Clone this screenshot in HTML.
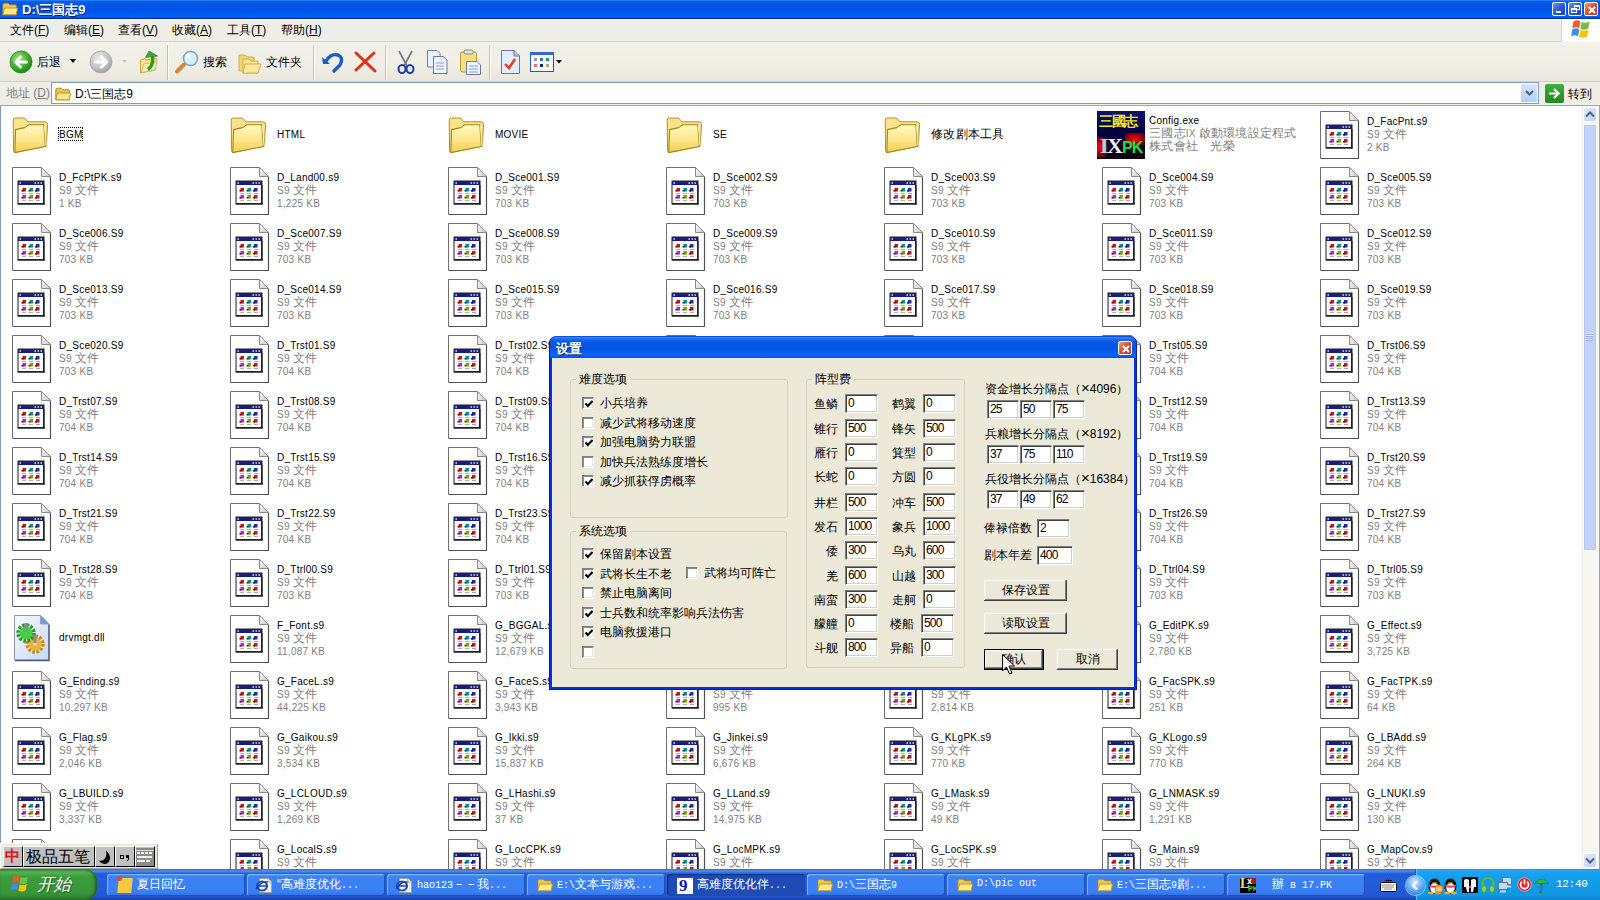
<!DOCTYPE html><html><head><meta charset="utf-8"><style>
*{margin:0;padding:0;box-sizing:border-box}
html,body{width:1600px;height:900px;overflow:hidden;background:#fff}
body{position:relative;font-family:"Liberation Sans",sans-serif;font-size:10px;color:#000}
.c{font-size:12px;line-height:13px}
.a{position:absolute}
.t{position:absolute;white-space:nowrap;line-height:13px}
svg{position:absolute;overflow:visible}
.it{position:absolute;width:218px;height:56px}
.fl .t{letter-spacing:.25px}
.nm{position:absolute;left:47px;white-space:nowrap;line-height:13px;font-size:11px}
.g{color:#808080}
</style></head><body>
<svg width="0" height="0" style="position:absolute">
<defs>
<linearGradient id="fold" x1="0" y1="0" x2="1" y2="1"><stop offset="0" stop-color="#fff"/><stop offset="1" stop-color="#c8c8c8"/></linearGradient>
<linearGradient id="fy" x1="0" y1="0" x2="0" y2="1"><stop offset="0" stop-color="#fff8c0"/><stop offset=".55" stop-color="#fbe68a"/><stop offset="1" stop-color="#f2cf52"/></linearGradient>
<g id="doc">
 <path d="M0.5,0.5 H29.5 L38.5,9.5 V47.5 H0.5 Z" fill="#fff" stroke="#6f6f6f" stroke-width="1"/>
 <path d="M38.5,47.5 V10 M1,47.5 H38.5" stroke="#505050" stroke-width="1.2" fill="none"/>
 <path d="M29.5,0.5 V9.5 H38.5 Z" fill="url(#fold)" stroke="#8a8a8a" stroke-width="1"/>
 <rect x="6" y="14" width="26" height="23" fill="#fbfbfb" stroke="#202020" stroke-width="1"/>
 <rect x="6" y="14" width="26" height="4" fill="#1a1a80"/>
 <rect x="7.5" y="15.3" width="1.4" height="1.4" fill="#fff"/>
 <rect x="22.5" y="15.3" width="1.4" height="1.4" fill="#fff"/><rect x="25.5" y="15.3" width="1.4" height="1.4" fill="#fff"/><rect x="28.5" y="15.3" width="1.4" height="1.4" fill="#fff"/>
 <rect x="31" y="18" width="1.5" height="19.5" fill="#202020"/><rect x="6" y="36" width="26.5" height="1.5" fill="#202020"/>
 <rect x="10.5" y="21" width="3.5" height="3.5" fill="#c01818"/><rect x="17.5" y="21" width="3.5" height="3.5" fill="#108898"/><rect x="24" y="21" width="3.5" height="3.5" fill="#1830b0"/>
 <rect x="10.5" y="28" width="3.5" height="3.5" fill="#c020c0"/><rect x="17.5" y="28" width="3.5" height="3.5" fill="#80a010"/><rect x="24" y="28" width="3.5" height="3.5" fill="#c01818"/>
 <rect x="9.5" y="23" width="2" height="1.5" fill="#600"/><rect x="16.5" y="23" width="2" height="1.5" fill="#044"/><rect x="23" y="23" width="2" height="1.5" fill="#004"/>
 <rect x="9.5" y="30" width="2" height="1.5" fill="#606"/><rect x="16.5" y="30" width="2" height="1.5" fill="#440"/><rect x="23" y="30" width="2" height="1.5" fill="#600"/>
 <rect x="10" y="26" width="4" height="1" fill="#a0c0a0"/><rect x="17" y="26" width="4" height="1" fill="#a0c0a0"/><rect x="24" y="26" width="4" height="1" fill="#c0a0a0"/>
 <rect x="10" y="33" width="4" height="1" fill="#a0c0a0"/><rect x="17" y="33" width="4" height="1" fill="#a0c0a0"/><rect x="24" y="33" width="4" height="1" fill="#c0a0a0"/>
</g>
<g id="folder">
 <path d="M1.2,9.5 Q1.2,7 3.5,7 H12.5 L16,10.8 H33 Q35.6,10.8 35.6,13.5 L34.2,35 L3,41.5 Q1.6,41.5 1.6,39.5 Z" fill="#f8e28a" stroke="#b89020" stroke-width="1"/>
 <path d="M3.6,18.6 L12.6,16.6 Q14,16.2 15,15 L16.5,13.8 H31.8 L33.4,35.6 L2.8,41.6 Z" fill="url(#fy)" stroke="#a88418" stroke-width="1.1"/>
 <path d="M32.5,14.5 L34,34.5" stroke="#fff6c0" stroke-width="1"/>
</g>
<g id="sfolder">
 <path d="M0.8,3 Q0.8,1.2 2.4,1.2 H6 L7.6,2.8 H13.4 Q14.6,2.8 14.6,4 V12.8 H0.8 Z" fill="#f0c850" stroke="#a88020" stroke-width=".9"/>
 <path d="M0.8,12.8 L2.6,6 H15.6 L14.2,12.8 Z" fill="#fde88a" stroke="#b89028" stroke-width=".9"/>
</g>
</defs></svg>
<div class="a" style="left:0;top:0;width:1600px;height:19px;background:linear-gradient(#3d95ff 0,#0a5fe8 1px,#0055e5 5px,#0056e8 12px,#0066ff 17px,#003aa8 18px,#00308c 19px)"></div>
<div class="a" style="left:0;top:19px;width:1600px;height:1px;background:#eef4fb"></div>
<svg style="left:2px;top:2px" width="16" height="14" viewBox="0 0 16 14"><use href="#sfolder"/></svg>
<div class="t" style="left:22px;top:3px;color:#fff;font-weight:bold;font-size:13px;line-height:14px;text-shadow:1px 1px 0 #0a1e6e">D:\三国志9</div>
<div class="a" style="left:1552px;top:2px;width:14px;height:14px;border:1px solid #fff;border-radius:2px;background:linear-gradient(135deg,#7096f4,#2a58d8 50%,#1a3fb8)"><div class="a" style="left:3px;top:8px;width:5px;height:2px;background:#fff"></div></div><div class="a" style="left:1568px;top:2px;width:14px;height:14px;border:1px solid #fff;border-radius:2px;background:linear-gradient(135deg,#7096f4,#2a58d8 50%,#1a3fb8)"><div class="a" style="left:5px;top:2px;width:6px;height:5px;border:1px solid #fff;border-top-width:2px"></div><div class="a" style="left:2px;top:5px;width:6px;height:5px;border:1px solid #fff;border-top-width:2px;background:#3a6ef0"></div></div><div class="a" style="left:1584px;top:2px;width:14px;height:14px;border:1px solid #fff;border-radius:2px;background:linear-gradient(135deg,#e8a080,#d35030 50%,#b83a1c)"><svg style="left:2px;top:2px" width="10" height="10"><path d="M2,2 L8,8 M8,2 L2,8" stroke="#fff" stroke-width="2"/></svg></div><div class="a" style="left:0;top:20px;width:1600px;height:21px;background:#efeee6"></div>
<div class="a" style="left:0;top:41px;width:1561px;height:1px;background:#d8d4c8"></div>
<div class="a" style="left:1561px;top:19px;width:39px;height:23px;background:#fff;border-left:1px solid #d8d4c8"></div>
<div class="t" style="left:10px;top:23px;font-size:12px;line-height:14px">文件(<u>F</u>)</div><div class="t" style="left:64px;top:23px;font-size:12px;line-height:14px">编辑(<u>E</u>)</div><div class="t" style="left:118px;top:23px;font-size:12px;line-height:14px">查看(<u>V</u>)</div><div class="t" style="left:172px;top:23px;font-size:12px;line-height:14px">收藏(<u>A</u>)</div><div class="t" style="left:227px;top:23px;font-size:12px;line-height:14px">工具(<u>T</u>)</div><div class="t" style="left:281px;top:23px;font-size:12px;line-height:14px">帮助(<u>H</u>)</div><svg style="left:1570px;top:19px" width="23" height="21" viewBox="0 0 20 18">
<path d="M3,2 Q6,0 9,2 L8,8 Q5,6 2,8 Z" fill="#f05a28"/><path d="M10,2.5 Q13,4 17,2 L16,8 Q13,10 9,8.5 Z" fill="#7cbb42"/>
<path d="M2,9 Q5,7 8,9 L7,15 Q4,13 1,15 Z" fill="#3a8ee8"/><path d="M9,9.5 Q12,11 16,9 L15,15 Q12,17 8,15.5 Z" fill="#f8c300"/></svg>
<div class="a" style="left:0;top:42px;width:1600px;height:40px;background:linear-gradient(#f2f1ea,#efede3 70%,#e9e7dc)"></div>
<div class="a" style="left:0;top:81px;width:1600px;height:1px;background:#d6d2c2"></div>
<div class="a" style="left:167px;top:45px;width:1px;height:35px;background:#c5c2b2"></div><div class="a" style="left:168px;top:45px;width:1px;height:35px;background:#fff"></div><div class="a" style="left:313px;top:45px;width:1px;height:35px;background:#c5c2b2"></div><div class="a" style="left:314px;top:45px;width:1px;height:35px;background:#fff"></div><div class="a" style="left:385px;top:45px;width:1px;height:35px;background:#c5c2b2"></div><div class="a" style="left:386px;top:45px;width:1px;height:35px;background:#fff"></div><div class="a" style="left:489px;top:45px;width:1px;height:35px;background:#c5c2b2"></div><div class="a" style="left:490px;top:45px;width:1px;height:35px;background:#fff"></div><svg style="left:9px;top:50px" width="24" height="24" viewBox="0 0 24 24">
<defs><radialGradient id="gb" cx=".4" cy=".35" r=".7"><stop offset="0" stop-color="#a9e68a"/><stop offset=".6" stop-color="#3cae2a"/><stop offset="1" stop-color="#1c7a14"/></radialGradient>
<radialGradient id="gg" cx=".4" cy=".35" r=".7"><stop offset="0" stop-color="#f0f0f0"/><stop offset=".6" stop-color="#c4c4c4"/><stop offset="1" stop-color="#9c9c9c"/></radialGradient></defs>
<circle cx="12" cy="12" r="11" fill="url(#gb)" stroke="#2a8a20" stroke-width="0.8"/>
<path d="M17.5,12 H7 M11.5,7 L6.5,12 L11.5,17" fill="none" stroke="#fff" stroke-width="3" stroke-linecap="round" stroke-linejoin="round"/></svg>
<div class="t" style="left:37px;top:55px;font-size:12px;line-height:14px">后退</div>
<svg style="left:70px;top:59px" width="7" height="5"><path d="M0,0 H6 L3,4 Z" fill="#000"/></svg>
<svg style="left:89px;top:50px" width="24" height="24" viewBox="0 0 24 24">
<circle cx="12" cy="12" r="11" fill="url(#gg)" stroke="#a8a8a8" stroke-width="0.8"/>
<path d="M6.5,12 H17 M12.5,7 L17.5,12 L12.5,17" fill="none" stroke="#fff" stroke-width="3" stroke-linecap="round" stroke-linejoin="round"/></svg>
<svg style="left:122px;top:60px" width="5" height="4"><path d="M0,0 H5 L2.5,3 Z" fill="#c8c8c8"/></svg>
<svg style="left:139px;top:50px" width="20" height="24" viewBox="0 0 20 24">
<path d="M1.5,10 L6,8.5 L7,10 L17.5,8 L16,20 L1.5,23 Z" fill="#f8e48c" stroke="#c8a444" stroke-width="0.9"/>
<path d="M2.5,22.5 L4.5,14 L18,12 L16,20 Z" fill="#fcefb0" stroke="#c8a444" stroke-width="0.7"/>
<path d="M9,19.5 Q14.5,16 13.5,6.5" fill="none" stroke="#22a022" stroke-width="3.4"/>
<path d="M6.5,7.5 L10,1 L18.5,6 Z" fill="#30b030" stroke="#1a701a" stroke-width="0.6"/></svg>
<svg style="left:174px;top:50px" width="24" height="24" viewBox="0 0 24 24">
<path d="M3,21.5 L10,14.5" stroke="#d08a40" stroke-width="4" stroke-linecap="round"/>
<circle cx="16.5" cy="8.5" r="7" fill="#d4f0fc" stroke="#8aa4c0" stroke-width="1.6"/>
<circle cx="14.5" cy="6.5" r="2.5" fill="#fff" opacity=".7"/></svg>
<div class="t" style="left:203px;top:55px;font-size:12px;line-height:14px">搜索</div>
<svg style="left:238px;top:52px" width="24" height="22" viewBox="0 0 24 22">
<path d="M1,3 H7 L9,5 H16 V19 H1 Z" fill="#f3d470" stroke="#c9a642" stroke-width="0.8"/>
<path d="M5,7 H11 L13,9 H20 V21 H5 Z" fill="#f8e390" stroke="#c9a642" stroke-width="0.8"/>
<path d="M7,12 H23 L20,21 H5 Z" fill="#f9e89c" stroke="#c9a642" stroke-width="0.8"/></svg>
<div class="t" style="left:266px;top:55px;font-size:12px;line-height:14px">文件夹</div>
<svg style="left:321px;top:51px" width="24" height="22" viewBox="0 0 24 22">
<path d="M5,10 Q10,2 17,4 Q23,7 19,14 L13,20" fill="none" stroke="#1a5cc8" stroke-width="3.4" stroke-linecap="round"/>
<path d="M1,6 L2,13 L9,13 Z" fill="#1a5cc8"/></svg>
<svg style="left:354px;top:51px" width="24" height="22" viewBox="0 0 24 22">
<path d="M2,2 L21,20 M20,2 L2,19" stroke="#e03018" stroke-width="3" stroke-linecap="round"/></svg>
<svg style="left:396px;top:50px" width="20" height="24" viewBox="0 0 20 24">
<path d="M3,1 L11,16 M16,1 L8,16" stroke="#707880" stroke-width="1.6"/>
<ellipse cx="6" cy="19" rx="3.5" ry="4" fill="none" stroke="#1a3aa8" stroke-width="2"/>
<ellipse cx="14" cy="19" rx="3.5" ry="4" fill="none" stroke="#1a3aa8" stroke-width="2"/></svg>
<svg style="left:427px;top:50px" width="24" height="24" viewBox="0 0 24 24">
<path d="M0.5,0.5 H10 L13,3.5 V17 H0.5 Z" fill="#eaf0ff" stroke="#7080a8" stroke-width="1"/>
<path d="M6.5,6.5 H16 L20,10 V23.5 H6.5 Z" fill="#eef3ff" stroke="#6878a8" stroke-width="1"/>
<path d="M9,13 H17 M9,16 H17 M9,19 H17" stroke="#8aa0d8" stroke-width="1"/></svg>
<svg style="left:460px;top:49px" width="24" height="26" viewBox="0 0 24 26">
<rect x="0.5" y="3" width="16" height="20" rx="2" fill="#f6e07a" stroke="#b89a40" stroke-width="1"/>
<rect x="4" y="1" width="9" height="4" rx="1.5" fill="#e0e0e0" stroke="#888" stroke-width="1"/>
<path d="M6.5,12.5 H17 L20.5,16 V25.5 H6.5 Z" fill="#eef3ff" stroke="#6878a8" stroke-width="1"/>
<path d="M9,17 H18 M9,20 H18 M9,23 H18" stroke="#8aa0d8" stroke-width="1"/></svg>
<svg style="left:501px;top:50px" width="20" height="24" viewBox="0 0 20 24">
<path d="M0.5,0.5 H13 L18.5,6 V23.5 H0.5 Z" fill="#e4ecfc" stroke="#6878a8" stroke-width="1"/>
<path d="M13,0.5 V6 H18.5" fill="#b0c4f0" stroke="#6878a8" stroke-width="1"/>
<path d="M4,14 L8,18 L14,9" fill="none" stroke="#e03a20" stroke-width="2.4"/></svg>
<svg style="left:530px;top:52px" width="24" height="20" viewBox="0 0 24 20">
<rect x="0.5" y="0.5" width="23" height="19" fill="#f4f8ff" stroke="#1a5cb8" stroke-width="1"/>
<rect x="0" y="0" width="24" height="3" fill="#2a6cc8"/>
<rect x="4" y="6" width="3" height="3" fill="#9898a8"/><rect x="10" y="6" width="3" height="3" fill="#3070c0"/><rect x="16" y="6" width="3" height="3" fill="#20a040"/>
<rect x="4" y="12" width="3" height="3" fill="#e07060"/><rect x="10" y="12" width="3" height="3" fill="#102870"/><rect x="16" y="12" width="3" height="3" fill="#c0a060"/></svg>
<svg style="left:556px;top:60px" width="6" height="4"><path d="M0,0 H6 L3,3.5 Z" fill="#000"/></svg>
<div class="a" style="left:0;top:82px;width:1600px;height:23px;background:#efeee6"></div>
<div class="t" style="left:6px;top:86px;font-size:12px;line-height:14px;color:#7f7f7f">地址 (<u>D</u>)</div>
<div class="a" style="left:51px;top:82px;width:1488px;height:22px;background:#fff;border:1px solid #7f9db9"></div>
<svg style="left:55px;top:87px" width="16" height="14" viewBox="0 0 16 14"><use href="#sfolder"/></svg>
<div class="t" style="left:75px;top:87px;font-size:12px;line-height:14px">D:\三国志9</div>
<div class="a" style="left:1521px;top:84px;width:16px;height:18px;background:linear-gradient(#d8e4fc,#b8cdf8);border-radius:1px"></div>
<svg style="left:1525px;top:90px" width="9" height="6"><path d="M1,1 L4.5,4.5 L8,1" fill="none" stroke="#4d6185" stroke-width="2"/></svg>
<div class="a" style="left:1545px;top:84px;width:19px;height:19px;border-radius:2px;background:linear-gradient(#40b040,#1d8a1d)"></div>
<svg style="left:1547px;top:86px" width="15" height="15"><path d="M2,7.5 H11 M7,3 L11.5,7.5 L7,12" fill="none" stroke="#fff" stroke-width="2.2"/></svg>
<div class="t" style="left:1568px;top:87px;font-size:12px;line-height:14px">转到</div>
<div class="a" style="left:0;top:105px;width:1600px;height:764px;background:#fff"></div>
<div class="a" style="left:0;top:105px;width:1px;height:764px;background:#7f9db9"></div>
<div class="a" style="left:0;top:105px;width:1600px;height:1px;background:#99a8c0"></div>
<div class="a" style="left:1582px;top:106px;width:17px;height:763px;background:#f7f6f0;border-left:1px solid #efeee6"></div>
<div class="a" style="left:1599px;top:105px;width:1px;height:764px;background:#9aa4b8"></div>
<div class="a" style="left:1583px;top:107px;width:14px;height:15px;border:1px solid #fff;border-radius:2px;background:linear-gradient(135deg,#dfe8fe,#c0d1f8)"></div>
<svg style="left:1585px;top:111px" width="10" height="7"><path d="M1,5.5 L5,1.5 L9,5.5" fill="none" stroke="#4d6185" stroke-width="2"/></svg>
<div class="a" style="left:1583px;top:124px;width:14px;height:427px;border:1px solid #fff;border-radius:2px;background:#c4d2f9;box-shadow:inset 0 0 0 1px #b6c6f2"></div>
<div class="a" style="left:1586px;top:333px;width:7px;height:8px;background:repeating-linear-gradient(#eef2fe 0 1px,#90a8e8 1px 2px)"></div>
<div class="a" style="left:1583px;top:853px;width:14px;height:15px;border:1px solid #fff;border-radius:2px;background:linear-gradient(135deg,#dfe8fe,#c0d1f8)"></div>
<svg style="left:1585px;top:857px" width="10" height="7"><path d="M1,1.5 L5,5.5 L9,1.5" fill="none" stroke="#4d6185" stroke-width="2"/></svg>
<div class="fl"><svg style="left:12px;top:111px" width="37" height="43" viewBox="0 0 37 43"><use href="#folder"/></svg><div class="t" style="left:59px;top:128px">BGM</div><svg style="left:230px;top:111px" width="37" height="43" viewBox="0 0 37 43"><use href="#folder"/></svg><div class="t" style="left:277px;top:128px">HTML</div><svg style="left:448px;top:111px" width="37" height="43" viewBox="0 0 37 43"><use href="#folder"/></svg><div class="t" style="left:495px;top:128px">MOVIE</div><svg style="left:666px;top:111px" width="37" height="43" viewBox="0 0 37 43"><use href="#folder"/></svg><div class="t" style="left:713px;top:128px">SE</div><svg style="left:884px;top:111px" width="37" height="43" viewBox="0 0 37 43"><use href="#folder"/></svg><div class="t" style="left:931px;top:128px"><span class="c">修改剧本工具</span></div><svg style="left:1320px;top:111px" width="39" height="48" viewBox="0 0 39 48"><use href="#doc"/></svg><div class="t" style="left:1367px;top:115px">D_FacPnt.s9<br><span class="g">S9 <span class="c">文件</span><br>2 KB</span></div><svg style="left:12px;top:167px" width="39" height="48" viewBox="0 0 39 48"><use href="#doc"/></svg><div class="t" style="left:59px;top:171px">D_FcPtPK.s9<br><span class="g">S9 <span class="c">文件</span><br>1 KB</span></div><svg style="left:230px;top:167px" width="39" height="48" viewBox="0 0 39 48"><use href="#doc"/></svg><div class="t" style="left:277px;top:171px">D_Land00.s9<br><span class="g">S9 <span class="c">文件</span><br>1,225 KB</span></div><svg style="left:448px;top:167px" width="39" height="48" viewBox="0 0 39 48"><use href="#doc"/></svg><div class="t" style="left:495px;top:171px">D_Sce001.S9<br><span class="g">S9 <span class="c">文件</span><br>703 KB</span></div><svg style="left:666px;top:167px" width="39" height="48" viewBox="0 0 39 48"><use href="#doc"/></svg><div class="t" style="left:713px;top:171px">D_Sce002.S9<br><span class="g">S9 <span class="c">文件</span><br>703 KB</span></div><svg style="left:884px;top:167px" width="39" height="48" viewBox="0 0 39 48"><use href="#doc"/></svg><div class="t" style="left:931px;top:171px">D_Sce003.S9<br><span class="g">S9 <span class="c">文件</span><br>703 KB</span></div><svg style="left:1102px;top:167px" width="39" height="48" viewBox="0 0 39 48"><use href="#doc"/></svg><div class="t" style="left:1149px;top:171px">D_Sce004.S9<br><span class="g">S9 <span class="c">文件</span><br>703 KB</span></div><svg style="left:1320px;top:167px" width="39" height="48" viewBox="0 0 39 48"><use href="#doc"/></svg><div class="t" style="left:1367px;top:171px">D_Sce005.S9<br><span class="g">S9 <span class="c">文件</span><br>703 KB</span></div><svg style="left:12px;top:223px" width="39" height="48" viewBox="0 0 39 48"><use href="#doc"/></svg><div class="t" style="left:59px;top:227px">D_Sce006.S9<br><span class="g">S9 <span class="c">文件</span><br>703 KB</span></div><svg style="left:230px;top:223px" width="39" height="48" viewBox="0 0 39 48"><use href="#doc"/></svg><div class="t" style="left:277px;top:227px">D_Sce007.S9<br><span class="g">S9 <span class="c">文件</span><br>703 KB</span></div><svg style="left:448px;top:223px" width="39" height="48" viewBox="0 0 39 48"><use href="#doc"/></svg><div class="t" style="left:495px;top:227px">D_Sce008.S9<br><span class="g">S9 <span class="c">文件</span><br>703 KB</span></div><svg style="left:666px;top:223px" width="39" height="48" viewBox="0 0 39 48"><use href="#doc"/></svg><div class="t" style="left:713px;top:227px">D_Sce009.S9<br><span class="g">S9 <span class="c">文件</span><br>703 KB</span></div><svg style="left:884px;top:223px" width="39" height="48" viewBox="0 0 39 48"><use href="#doc"/></svg><div class="t" style="left:931px;top:227px">D_Sce010.S9<br><span class="g">S9 <span class="c">文件</span><br>703 KB</span></div><svg style="left:1102px;top:223px" width="39" height="48" viewBox="0 0 39 48"><use href="#doc"/></svg><div class="t" style="left:1149px;top:227px">D_Sce011.S9<br><span class="g">S9 <span class="c">文件</span><br>703 KB</span></div><svg style="left:1320px;top:223px" width="39" height="48" viewBox="0 0 39 48"><use href="#doc"/></svg><div class="t" style="left:1367px;top:227px">D_Sce012.S9<br><span class="g">S9 <span class="c">文件</span><br>703 KB</span></div><svg style="left:12px;top:279px" width="39" height="48" viewBox="0 0 39 48"><use href="#doc"/></svg><div class="t" style="left:59px;top:283px">D_Sce013.S9<br><span class="g">S9 <span class="c">文件</span><br>703 KB</span></div><svg style="left:230px;top:279px" width="39" height="48" viewBox="0 0 39 48"><use href="#doc"/></svg><div class="t" style="left:277px;top:283px">D_Sce014.S9<br><span class="g">S9 <span class="c">文件</span><br>703 KB</span></div><svg style="left:448px;top:279px" width="39" height="48" viewBox="0 0 39 48"><use href="#doc"/></svg><div class="t" style="left:495px;top:283px">D_Sce015.S9<br><span class="g">S9 <span class="c">文件</span><br>703 KB</span></div><svg style="left:666px;top:279px" width="39" height="48" viewBox="0 0 39 48"><use href="#doc"/></svg><div class="t" style="left:713px;top:283px">D_Sce016.S9<br><span class="g">S9 <span class="c">文件</span><br>703 KB</span></div><svg style="left:884px;top:279px" width="39" height="48" viewBox="0 0 39 48"><use href="#doc"/></svg><div class="t" style="left:931px;top:283px">D_Sce017.S9<br><span class="g">S9 <span class="c">文件</span><br>703 KB</span></div><svg style="left:1102px;top:279px" width="39" height="48" viewBox="0 0 39 48"><use href="#doc"/></svg><div class="t" style="left:1149px;top:283px">D_Sce018.S9<br><span class="g">S9 <span class="c">文件</span><br>703 KB</span></div><svg style="left:1320px;top:279px" width="39" height="48" viewBox="0 0 39 48"><use href="#doc"/></svg><div class="t" style="left:1367px;top:283px">D_Sce019.S9<br><span class="g">S9 <span class="c">文件</span><br>703 KB</span></div><svg style="left:12px;top:335px" width="39" height="48" viewBox="0 0 39 48"><use href="#doc"/></svg><div class="t" style="left:59px;top:339px">D_Sce020.S9<br><span class="g">S9 <span class="c">文件</span><br>703 KB</span></div><svg style="left:230px;top:335px" width="39" height="48" viewBox="0 0 39 48"><use href="#doc"/></svg><div class="t" style="left:277px;top:339px">D_Trst01.S9<br><span class="g">S9 <span class="c">文件</span><br>704 KB</span></div><svg style="left:448px;top:335px" width="39" height="48" viewBox="0 0 39 48"><use href="#doc"/></svg><div class="t" style="left:495px;top:339px">D_Trst02.S9<br><span class="g">S9 <span class="c">文件</span><br>704 KB</span></div><svg style="left:666px;top:335px" width="39" height="48" viewBox="0 0 39 48"><use href="#doc"/></svg><div class="t" style="left:713px;top:339px">D_Trst03.S9<br><span class="g">S9 <span class="c">文件</span><br>704 KB</span></div><svg style="left:884px;top:335px" width="39" height="48" viewBox="0 0 39 48"><use href="#doc"/></svg><div class="t" style="left:931px;top:339px">D_Trst04.S9<br><span class="g">S9 <span class="c">文件</span><br>704 KB</span></div><svg style="left:1102px;top:335px" width="39" height="48" viewBox="0 0 39 48"><use href="#doc"/></svg><div class="t" style="left:1149px;top:339px">D_Trst05.S9<br><span class="g">S9 <span class="c">文件</span><br>704 KB</span></div><svg style="left:1320px;top:335px" width="39" height="48" viewBox="0 0 39 48"><use href="#doc"/></svg><div class="t" style="left:1367px;top:339px">D_Trst06.S9<br><span class="g">S9 <span class="c">文件</span><br>704 KB</span></div><svg style="left:12px;top:391px" width="39" height="48" viewBox="0 0 39 48"><use href="#doc"/></svg><div class="t" style="left:59px;top:395px">D_Trst07.S9<br><span class="g">S9 <span class="c">文件</span><br>704 KB</span></div><svg style="left:230px;top:391px" width="39" height="48" viewBox="0 0 39 48"><use href="#doc"/></svg><div class="t" style="left:277px;top:395px">D_Trst08.S9<br><span class="g">S9 <span class="c">文件</span><br>704 KB</span></div><svg style="left:448px;top:391px" width="39" height="48" viewBox="0 0 39 48"><use href="#doc"/></svg><div class="t" style="left:495px;top:395px">D_Trst09.S9<br><span class="g">S9 <span class="c">文件</span><br>704 KB</span></div><svg style="left:666px;top:391px" width="39" height="48" viewBox="0 0 39 48"><use href="#doc"/></svg><div class="t" style="left:713px;top:395px">D_Trst10.S9<br><span class="g">S9 <span class="c">文件</span><br>704 KB</span></div><svg style="left:884px;top:391px" width="39" height="48" viewBox="0 0 39 48"><use href="#doc"/></svg><div class="t" style="left:931px;top:395px">D_Trst11.S9<br><span class="g">S9 <span class="c">文件</span><br>704 KB</span></div><svg style="left:1102px;top:391px" width="39" height="48" viewBox="0 0 39 48"><use href="#doc"/></svg><div class="t" style="left:1149px;top:395px">D_Trst12.S9<br><span class="g">S9 <span class="c">文件</span><br>704 KB</span></div><svg style="left:1320px;top:391px" width="39" height="48" viewBox="0 0 39 48"><use href="#doc"/></svg><div class="t" style="left:1367px;top:395px">D_Trst13.S9<br><span class="g">S9 <span class="c">文件</span><br>704 KB</span></div><svg style="left:12px;top:447px" width="39" height="48" viewBox="0 0 39 48"><use href="#doc"/></svg><div class="t" style="left:59px;top:451px">D_Trst14.S9<br><span class="g">S9 <span class="c">文件</span><br>704 KB</span></div><svg style="left:230px;top:447px" width="39" height="48" viewBox="0 0 39 48"><use href="#doc"/></svg><div class="t" style="left:277px;top:451px">D_Trst15.S9<br><span class="g">S9 <span class="c">文件</span><br>704 KB</span></div><svg style="left:448px;top:447px" width="39" height="48" viewBox="0 0 39 48"><use href="#doc"/></svg><div class="t" style="left:495px;top:451px">D_Trst16.S9<br><span class="g">S9 <span class="c">文件</span><br>704 KB</span></div><svg style="left:666px;top:447px" width="39" height="48" viewBox="0 0 39 48"><use href="#doc"/></svg><div class="t" style="left:713px;top:451px">D_Trst17.S9<br><span class="g">S9 <span class="c">文件</span><br>704 KB</span></div><svg style="left:884px;top:447px" width="39" height="48" viewBox="0 0 39 48"><use href="#doc"/></svg><div class="t" style="left:931px;top:451px">D_Trst18.S9<br><span class="g">S9 <span class="c">文件</span><br>704 KB</span></div><svg style="left:1102px;top:447px" width="39" height="48" viewBox="0 0 39 48"><use href="#doc"/></svg><div class="t" style="left:1149px;top:451px">D_Trst19.S9<br><span class="g">S9 <span class="c">文件</span><br>704 KB</span></div><svg style="left:1320px;top:447px" width="39" height="48" viewBox="0 0 39 48"><use href="#doc"/></svg><div class="t" style="left:1367px;top:451px">D_Trst20.S9<br><span class="g">S9 <span class="c">文件</span><br>704 KB</span></div><svg style="left:12px;top:503px" width="39" height="48" viewBox="0 0 39 48"><use href="#doc"/></svg><div class="t" style="left:59px;top:507px">D_Trst21.S9<br><span class="g">S9 <span class="c">文件</span><br>704 KB</span></div><svg style="left:230px;top:503px" width="39" height="48" viewBox="0 0 39 48"><use href="#doc"/></svg><div class="t" style="left:277px;top:507px">D_Trst22.S9<br><span class="g">S9 <span class="c">文件</span><br>704 KB</span></div><svg style="left:448px;top:503px" width="39" height="48" viewBox="0 0 39 48"><use href="#doc"/></svg><div class="t" style="left:495px;top:507px">D_Trst23.S9<br><span class="g">S9 <span class="c">文件</span><br>704 KB</span></div><svg style="left:666px;top:503px" width="39" height="48" viewBox="0 0 39 48"><use href="#doc"/></svg><div class="t" style="left:713px;top:507px">D_Trst24.S9<br><span class="g">S9 <span class="c">文件</span><br>704 KB</span></div><svg style="left:884px;top:503px" width="39" height="48" viewBox="0 0 39 48"><use href="#doc"/></svg><div class="t" style="left:931px;top:507px">D_Trst25.S9<br><span class="g">S9 <span class="c">文件</span><br>704 KB</span></div><svg style="left:1102px;top:503px" width="39" height="48" viewBox="0 0 39 48"><use href="#doc"/></svg><div class="t" style="left:1149px;top:507px">D_Trst26.S9<br><span class="g">S9 <span class="c">文件</span><br>704 KB</span></div><svg style="left:1320px;top:503px" width="39" height="48" viewBox="0 0 39 48"><use href="#doc"/></svg><div class="t" style="left:1367px;top:507px">D_Trst27.S9<br><span class="g">S9 <span class="c">文件</span><br>704 KB</span></div><svg style="left:12px;top:559px" width="39" height="48" viewBox="0 0 39 48"><use href="#doc"/></svg><div class="t" style="left:59px;top:563px">D_Trst28.S9<br><span class="g">S9 <span class="c">文件</span><br>704 KB</span></div><svg style="left:230px;top:559px" width="39" height="48" viewBox="0 0 39 48"><use href="#doc"/></svg><div class="t" style="left:277px;top:563px">D_Ttrl00.S9<br><span class="g">S9 <span class="c">文件</span><br>703 KB</span></div><svg style="left:448px;top:559px" width="39" height="48" viewBox="0 0 39 48"><use href="#doc"/></svg><div class="t" style="left:495px;top:563px">D_Ttrl01.S9<br><span class="g">S9 <span class="c">文件</span><br>703 KB</span></div><svg style="left:666px;top:559px" width="39" height="48" viewBox="0 0 39 48"><use href="#doc"/></svg><div class="t" style="left:713px;top:563px">D_Ttrl02.S9<br><span class="g">S9 <span class="c">文件</span><br>703 KB</span></div><svg style="left:884px;top:559px" width="39" height="48" viewBox="0 0 39 48"><use href="#doc"/></svg><div class="t" style="left:931px;top:563px">D_Ttrl03.S9<br><span class="g">S9 <span class="c">文件</span><br>703 KB</span></div><svg style="left:1102px;top:559px" width="39" height="48" viewBox="0 0 39 48"><use href="#doc"/></svg><div class="t" style="left:1149px;top:563px">D_Ttrl04.S9<br><span class="g">S9 <span class="c">文件</span><br>703 KB</span></div><svg style="left:1320px;top:559px" width="39" height="48" viewBox="0 0 39 48"><use href="#doc"/></svg><div class="t" style="left:1367px;top:563px">D_Ttrl05.S9<br><span class="g">S9 <span class="c">文件</span><br>703 KB</span></div><svg style="left:230px;top:615px" width="39" height="48" viewBox="0 0 39 48"><use href="#doc"/></svg><div class="t" style="left:277px;top:619px">F_Font.s9<br><span class="g">S9 <span class="c">文件</span><br>11,087 KB</span></div><svg style="left:448px;top:615px" width="39" height="48" viewBox="0 0 39 48"><use href="#doc"/></svg><div class="t" style="left:495px;top:619px">G_BGGAL.s9<br><span class="g">S9 <span class="c">文件</span><br>12,679 KB</span></div><svg style="left:666px;top:615px" width="39" height="48" viewBox="0 0 39 48"><use href="#doc"/></svg><div class="t" style="left:713px;top:619px">G_EdCPK.s9<br><span class="g">S9 <span class="c">文件</span><br>1,000 KB</span></div><svg style="left:884px;top:615px" width="39" height="48" viewBox="0 0 39 48"><use href="#doc"/></svg><div class="t" style="left:931px;top:619px">G_EdMPK.s9<br><span class="g">S9 <span class="c">文件</span><br>1,000 KB</span></div><svg style="left:1102px;top:615px" width="39" height="48" viewBox="0 0 39 48"><use href="#doc"/></svg><div class="t" style="left:1149px;top:619px">G_EditPK.s9<br><span class="g">S9 <span class="c">文件</span><br>2,780 KB</span></div><svg style="left:1320px;top:615px" width="39" height="48" viewBox="0 0 39 48"><use href="#doc"/></svg><div class="t" style="left:1367px;top:619px">G_Effect.s9<br><span class="g">S9 <span class="c">文件</span><br>3,725 KB</span></div><svg style="left:12px;top:671px" width="39" height="48" viewBox="0 0 39 48"><use href="#doc"/></svg><div class="t" style="left:59px;top:675px">G_Ending.s9<br><span class="g">S9 <span class="c">文件</span><br>10,297 KB</span></div><svg style="left:230px;top:671px" width="39" height="48" viewBox="0 0 39 48"><use href="#doc"/></svg><div class="t" style="left:277px;top:675px">G_FaceL.s9<br><span class="g">S9 <span class="c">文件</span><br>44,225 KB</span></div><svg style="left:448px;top:671px" width="39" height="48" viewBox="0 0 39 48"><use href="#doc"/></svg><div class="t" style="left:495px;top:675px">G_FaceS.s9<br><span class="g">S9 <span class="c">文件</span><br>3,943 KB</span></div><svg style="left:666px;top:671px" width="39" height="48" viewBox="0 0 39 48"><use href="#doc"/></svg><div class="t" style="left:713px;top:675px">G_FacMPK.s9<br><span class="g">S9 <span class="c">文件</span><br>995 KB</span></div><svg style="left:884px;top:671px" width="39" height="48" viewBox="0 0 39 48"><use href="#doc"/></svg><div class="t" style="left:931px;top:675px">G_FacPPK.s9<br><span class="g">S9 <span class="c">文件</span><br>2,814 KB</span></div><svg style="left:1102px;top:671px" width="39" height="48" viewBox="0 0 39 48"><use href="#doc"/></svg><div class="t" style="left:1149px;top:675px">G_FacSPK.s9<br><span class="g">S9 <span class="c">文件</span><br>251 KB</span></div><svg style="left:1320px;top:671px" width="39" height="48" viewBox="0 0 39 48"><use href="#doc"/></svg><div class="t" style="left:1367px;top:675px">G_FacTPK.s9<br><span class="g">S9 <span class="c">文件</span><br>64 KB</span></div><svg style="left:12px;top:727px" width="39" height="48" viewBox="0 0 39 48"><use href="#doc"/></svg><div class="t" style="left:59px;top:731px">G_Flag.s9<br><span class="g">S9 <span class="c">文件</span><br>2,046 KB</span></div><svg style="left:230px;top:727px" width="39" height="48" viewBox="0 0 39 48"><use href="#doc"/></svg><div class="t" style="left:277px;top:731px">G_Gaikou.s9<br><span class="g">S9 <span class="c">文件</span><br>3,534 KB</span></div><svg style="left:448px;top:727px" width="39" height="48" viewBox="0 0 39 48"><use href="#doc"/></svg><div class="t" style="left:495px;top:731px">G_Ikki.s9<br><span class="g">S9 <span class="c">文件</span><br>15,837 KB</span></div><svg style="left:666px;top:727px" width="39" height="48" viewBox="0 0 39 48"><use href="#doc"/></svg><div class="t" style="left:713px;top:731px">G_Jinkei.s9<br><span class="g">S9 <span class="c">文件</span><br>6,676 KB</span></div><svg style="left:884px;top:727px" width="39" height="48" viewBox="0 0 39 48"><use href="#doc"/></svg><div class="t" style="left:931px;top:731px">G_KLgPK.s9<br><span class="g">S9 <span class="c">文件</span><br>770 KB</span></div><svg style="left:1102px;top:727px" width="39" height="48" viewBox="0 0 39 48"><use href="#doc"/></svg><div class="t" style="left:1149px;top:731px">G_KLogo.s9<br><span class="g">S9 <span class="c">文件</span><br>770 KB</span></div><svg style="left:1320px;top:727px" width="39" height="48" viewBox="0 0 39 48"><use href="#doc"/></svg><div class="t" style="left:1367px;top:731px">G_LBAdd.s9<br><span class="g">S9 <span class="c">文件</span><br>264 KB</span></div><svg style="left:12px;top:783px" width="39" height="48" viewBox="0 0 39 48"><use href="#doc"/></svg><div class="t" style="left:59px;top:787px">G_LBUILD.s9<br><span class="g">S9 <span class="c">文件</span><br>3,337 KB</span></div><svg style="left:230px;top:783px" width="39" height="48" viewBox="0 0 39 48"><use href="#doc"/></svg><div class="t" style="left:277px;top:787px">G_LCLOUD.s9<br><span class="g">S9 <span class="c">文件</span><br>1,269 KB</span></div><svg style="left:448px;top:783px" width="39" height="48" viewBox="0 0 39 48"><use href="#doc"/></svg><div class="t" style="left:495px;top:787px">G_LHashi.s9<br><span class="g">S9 <span class="c">文件</span><br>37 KB</span></div><svg style="left:666px;top:783px" width="39" height="48" viewBox="0 0 39 48"><use href="#doc"/></svg><div class="t" style="left:713px;top:787px">G_LLand.s9<br><span class="g">S9 <span class="c">文件</span><br>14,975 KB</span></div><svg style="left:884px;top:783px" width="39" height="48" viewBox="0 0 39 48"><use href="#doc"/></svg><div class="t" style="left:931px;top:787px">G_LMask.s9<br><span class="g">S9 <span class="c">文件</span><br>49 KB</span></div><svg style="left:1102px;top:783px" width="39" height="48" viewBox="0 0 39 48"><use href="#doc"/></svg><div class="t" style="left:1149px;top:787px">G_LNMASK.s9<br><span class="g">S9 <span class="c">文件</span><br>1,291 KB</span></div><svg style="left:1320px;top:783px" width="39" height="48" viewBox="0 0 39 48"><use href="#doc"/></svg><div class="t" style="left:1367px;top:787px">G_LNUKI.s9<br><span class="g">S9 <span class="c">文件</span><br>130 KB</span></div><svg style="left:12px;top:839px" width="39" height="48" viewBox="0 0 39 48"><use href="#doc"/></svg><div class="t" style="left:59px;top:843px">G_LocalC.s9<br><span class="g">S9 <span class="c">文件</span><br>1 KB</span></div><svg style="left:230px;top:839px" width="39" height="48" viewBox="0 0 39 48"><use href="#doc"/></svg><div class="t" style="left:277px;top:843px">G_LocalS.s9<br><span class="g">S9 <span class="c">文件</span><br>1 KB</span></div><svg style="left:448px;top:839px" width="39" height="48" viewBox="0 0 39 48"><use href="#doc"/></svg><div class="t" style="left:495px;top:843px">G_LocCPK.s9<br><span class="g">S9 <span class="c">文件</span><br>1 KB</span></div><svg style="left:666px;top:839px" width="39" height="48" viewBox="0 0 39 48"><use href="#doc"/></svg><div class="t" style="left:713px;top:843px">G_LocMPK.s9<br><span class="g">S9 <span class="c">文件</span><br>1 KB</span></div><svg style="left:884px;top:839px" width="39" height="48" viewBox="0 0 39 48"><use href="#doc"/></svg><div class="t" style="left:931px;top:843px">G_LocSPK.s9<br><span class="g">S9 <span class="c">文件</span><br>1 KB</span></div><svg style="left:1102px;top:839px" width="39" height="48" viewBox="0 0 39 48"><use href="#doc"/></svg><div class="t" style="left:1149px;top:843px">G_Main.s9<br><span class="g">S9 <span class="c">文件</span><br>1 KB</span></div><svg style="left:1320px;top:839px" width="39" height="48" viewBox="0 0 39 48"><use href="#doc"/></svg><div class="t" style="left:1367px;top:843px">G_MapCov.s9<br><span class="g">S9 <span class="c">文件</span><br>1 KB</span></div><div class="a" style="left:1097px;top:111px;width:48px;height:48px;background:linear-gradient(#101070,#000040 45%,#100010);overflow:hidden">
<div class="a" style="left:28px;top:22px;width:20px;height:12px;background:radial-gradient(#f01010,#800000 70%,transparent)"></div>
<div class="a" style="left:-4px;top:26px;width:14px;height:20px;background:radial-gradient(#f01010,#900000 60%,transparent)"></div>
<div class="a" style="left:2px;top:3px;font-size:14px;line-height:16px;color:#e8e818;font-weight:bold;letter-spacing:-1.5px;font-family:Liberation Serif,serif">三國志</div>
<div class="a" style="left:3px;top:24px;font-family:Liberation Serif,serif;font-size:22px;line-height:22px;color:#90e0e8;font-weight:bold">I</div>
<div class="a" style="left:10px;top:24px;font-family:Liberation Serif,serif;font-size:22px;line-height:22px;color:#f0f0f0;font-weight:bold">X</div>
<div class="a" style="left:25px;top:29px;font-size:16px;line-height:16px;color:#20e040;font-weight:bold;letter-spacing:-1px">PK</div>
</div>
<div class="t" style="left:1149px;top:114px">Config.exe<br><span class="g"><span class="c">三國志</span>IX <span class="c">啟動環境設定程式</span><br><span class="c">株式會社　光榮</span></span></div>
<svg style="left:13px;top:614px" width="38" height="48" viewBox="0 0 38 48">
<defs><linearGradient id="dg" x1="0" y1="0" x2="1" y2="1"><stop offset="0" stop-color="#f8faff"/><stop offset="1" stop-color="#c4d8f6"/></linearGradient></defs>
<path d="M1.5,1.5 H27.5 L36,10 V46 H1.5 Z" fill="url(#dg)" stroke="#8898b8" stroke-width="1"/>
<path d="M36,10.5 V46.5 H2" fill="none" stroke="#505a78" stroke-width="1.4"/>
<path d="M27.5,1.5 V10 H36 Z" fill="#6a9ee0" stroke="#8898b8" stroke-width=".8"/>
<circle cx="22" cy="30" r="6.5" fill="#f0b428"/><circle cx="22" cy="30" r="8" fill="none" stroke="#c88a18" stroke-width="3.4" stroke-dasharray="2.6 1.6"/>
<circle cx="22" cy="30" r="2" fill="#c0d4f0"/>
<circle cx="13" cy="19" r="6.5" fill="#44d044"/><circle cx="13" cy="19" r="8" fill="none" stroke="#1e9a1e" stroke-width="3.4" stroke-dasharray="2.6 1.6"/>
<rect x="11.5" y="9" width="3" height="9" fill="#8a8aa8"/><rect x="20.5" y="21" width="3" height="8" fill="#8a8aa8"/>
</svg>
<div class="t" style="left:59px;top:631px">drvmgt.dll</div>
</div><div class="a" style="left:58px;top:127px;width:25px;height:14px;border:1px dotted #000"></div><div class="a" style="left:549px;top:336px;width:588px;height:354px;background:#0831d9;border-radius:7px 7px 0 0;border:1px solid #001ea0;border-top-color:#0a50e0"></div><div class="a" style="left:550px;top:337px;width:586px;height:21px;border-radius:6px 6px 0 0;background:linear-gradient(#3c8eff 0,#1a6af6 2px,#0858e8 5px,#0454e4 12px,#0866ff 18px,#0552e0 21px)"></div><div class="a" style="left:552px;top:358px;width:582px;height:329px;background:#ece9d8"></div><div class="t" style="left:556px;top:342px;color:#fff;font-weight:bold;font-size:13px;line-height:14px;text-shadow:1px 1px 0 #0a1e6e">设置</div><div class="a" style="left:1118px;top:341px;width:14px;height:14px;border:1px solid #fff;border-radius:2px;background:linear-gradient(135deg,#e8a080,#d35030 50%,#b83a1c)"><svg style="left:2px;top:2px" width="10" height="10"><path d="M2,2 L8,8 M8,2 L2,8" stroke="#fff" stroke-width="2"/></svg></div><div class="a" style="left:570px;top:379px;width:218px;height:139px;border:1px solid #d0d0bf;border-radius:3px"></div><div class="t" style="left:576px;top:372px;padding:0 3px;background:#ece9d8;font-size:12px;line-height:14px">难度选项</div><div class="a" style="left:570px;top:531px;width:217px;height:138px;border:1px solid #d0d0bf;border-radius:3px"></div><div class="t" style="left:576px;top:524px;padding:0 3px;background:#ece9d8;font-size:12px;line-height:14px">系统选项</div><div class="a" style="left:806px;top:379px;width:159px;height:289px;border:1px solid #d0d0bf;border-radius:3px"></div><div class="t" style="left:812px;top:372px;padding:0 3px;background:#ece9d8;font-size:12px;line-height:14px">阵型费</div><div class="a" style="left:582px;top:397px;width:12px;height:12px;background:#fff;border-top:1px solid #808080;border-left:1px solid #808080;border-right:1px solid #fff;border-bottom:1px solid #fff;box-shadow:inset 1px 1px 0 #8a8a8a, inset -1px -1px 0 #e8e6da"><svg style="left:1px;top:1px" width="10" height="10"><path d="M1.5,4.5 L3.8,7 L8.5,2" fill="none" stroke="#000" stroke-width="2.2"/></svg></div><div class="t" style="left:600px;top:396px;font-size:12px;line-height:14px">小兵培养</div><div class="a" style="left:582px;top:417px;width:12px;height:12px;background:#fff;border-top:1px solid #808080;border-left:1px solid #808080;border-right:1px solid #fff;border-bottom:1px solid #fff;box-shadow:inset 1px 1px 0 #8a8a8a, inset -1px -1px 0 #e8e6da"></div><div class="t" style="left:600px;top:416px;font-size:12px;line-height:14px">减少武将移动速度</div><div class="a" style="left:582px;top:436px;width:12px;height:12px;background:#fff;border-top:1px solid #808080;border-left:1px solid #808080;border-right:1px solid #fff;border-bottom:1px solid #fff;box-shadow:inset 1px 1px 0 #8a8a8a, inset -1px -1px 0 #e8e6da"><svg style="left:1px;top:1px" width="10" height="10"><path d="M1.5,4.5 L3.8,7 L8.5,2" fill="none" stroke="#000" stroke-width="2.2"/></svg></div><div class="t" style="left:600px;top:435px;font-size:12px;line-height:14px">加强电脑势力联盟</div><div class="a" style="left:582px;top:456px;width:12px;height:12px;background:#fff;border-top:1px solid #808080;border-left:1px solid #808080;border-right:1px solid #fff;border-bottom:1px solid #fff;box-shadow:inset 1px 1px 0 #8a8a8a, inset -1px -1px 0 #e8e6da"></div><div class="t" style="left:600px;top:455px;font-size:12px;line-height:14px">加快兵法熟练度增长</div><div class="a" style="left:582px;top:475px;width:12px;height:12px;background:#fff;border-top:1px solid #808080;border-left:1px solid #808080;border-right:1px solid #fff;border-bottom:1px solid #fff;box-shadow:inset 1px 1px 0 #8a8a8a, inset -1px -1px 0 #e8e6da"><svg style="left:1px;top:1px" width="10" height="10"><path d="M1.5,4.5 L3.8,7 L8.5,2" fill="none" stroke="#000" stroke-width="2.2"/></svg></div><div class="t" style="left:600px;top:474px;font-size:12px;line-height:14px">减少抓获俘虏概率</div><div class="a" style="left:582px;top:548px;width:12px;height:12px;background:#fff;border-top:1px solid #808080;border-left:1px solid #808080;border-right:1px solid #fff;border-bottom:1px solid #fff;box-shadow:inset 1px 1px 0 #8a8a8a, inset -1px -1px 0 #e8e6da"><svg style="left:1px;top:1px" width="10" height="10"><path d="M1.5,4.5 L3.8,7 L8.5,2" fill="none" stroke="#000" stroke-width="2.2"/></svg></div><div class="t" style="left:600px;top:547px;font-size:12px;line-height:14px">保留剧本设置</div><div class="a" style="left:582px;top:568px;width:12px;height:12px;background:#fff;border-top:1px solid #808080;border-left:1px solid #808080;border-right:1px solid #fff;border-bottom:1px solid #fff;box-shadow:inset 1px 1px 0 #8a8a8a, inset -1px -1px 0 #e8e6da"><svg style="left:1px;top:1px" width="10" height="10"><path d="M1.5,4.5 L3.8,7 L8.5,2" fill="none" stroke="#000" stroke-width="2.2"/></svg></div><div class="t" style="left:600px;top:567px;font-size:12px;line-height:14px">武将长生不老</div><div class="a" style="left:582px;top:587px;width:12px;height:12px;background:#fff;border-top:1px solid #808080;border-left:1px solid #808080;border-right:1px solid #fff;border-bottom:1px solid #fff;box-shadow:inset 1px 1px 0 #8a8a8a, inset -1px -1px 0 #e8e6da"></div><div class="t" style="left:600px;top:586px;font-size:12px;line-height:14px">禁止电脑离间</div><div class="a" style="left:582px;top:607px;width:12px;height:12px;background:#fff;border-top:1px solid #808080;border-left:1px solid #808080;border-right:1px solid #fff;border-bottom:1px solid #fff;box-shadow:inset 1px 1px 0 #8a8a8a, inset -1px -1px 0 #e8e6da"><svg style="left:1px;top:1px" width="10" height="10"><path d="M1.5,4.5 L3.8,7 L8.5,2" fill="none" stroke="#000" stroke-width="2.2"/></svg></div><div class="t" style="left:600px;top:606px;font-size:12px;line-height:14px">士兵数和统率影响兵法伤害</div><div class="a" style="left:582px;top:626px;width:12px;height:12px;background:#fff;border-top:1px solid #808080;border-left:1px solid #808080;border-right:1px solid #fff;border-bottom:1px solid #fff;box-shadow:inset 1px 1px 0 #8a8a8a, inset -1px -1px 0 #e8e6da"><svg style="left:1px;top:1px" width="10" height="10"><path d="M1.5,4.5 L3.8,7 L8.5,2" fill="none" stroke="#000" stroke-width="2.2"/></svg></div><div class="t" style="left:600px;top:625px;font-size:12px;line-height:14px">电脑救援港口</div><div class="a" style="left:582px;top:646px;width:12px;height:12px;background:#fff;border-top:1px solid #808080;border-left:1px solid #808080;border-right:1px solid #fff;border-bottom:1px solid #fff;box-shadow:inset 1px 1px 0 #8a8a8a, inset -1px -1px 0 #e8e6da"></div><div class="a" style="left:686px;top:567px;width:12px;height:12px;background:#fff;border-top:1px solid #808080;border-left:1px solid #808080;border-right:1px solid #fff;border-bottom:1px solid #fff;box-shadow:inset 1px 1px 0 #8a8a8a, inset -1px -1px 0 #e8e6da"></div><div class="t" style="left:704px;top:566px;font-size:12px;line-height:14px">武将均可阵亡</div><div class="t" style="left:814px;top:397px;font-size:12px;line-height:14px">鱼鳞</div><div class="a" style="left:845px;top:394px;width:33px;height:19px;background:#fff;border-top:1px solid #808080;border-left:1px solid #808080;border-right:1px solid #fff;border-bottom:1px solid #fff;box-shadow:inset 1px 1px 0 #404040, inset -1px -1px 0 #d4d0c8"></div><div class="t" style="left:848px;top:397px;font-size:12px;line-height:13px;letter-spacing:-0.8px">0</div><div class="t" style="left:892px;top:397px;font-size:12px;line-height:14px">鹤翼</div><div class="a" style="left:923px;top:394px;width:33px;height:19px;background:#fff;border-top:1px solid #808080;border-left:1px solid #808080;border-right:1px solid #fff;border-bottom:1px solid #fff;box-shadow:inset 1px 1px 0 #404040, inset -1px -1px 0 #d4d0c8"></div><div class="t" style="left:926px;top:397px;font-size:12px;line-height:13px;letter-spacing:-0.8px">0</div><div class="t" style="left:814px;top:422px;font-size:12px;line-height:14px">锥行</div><div class="a" style="left:845px;top:419px;width:33px;height:19px;background:#fff;border-top:1px solid #808080;border-left:1px solid #808080;border-right:1px solid #fff;border-bottom:1px solid #fff;box-shadow:inset 1px 1px 0 #404040, inset -1px -1px 0 #d4d0c8"></div><div class="t" style="left:848px;top:422px;font-size:12px;line-height:13px;letter-spacing:-0.8px">500</div><div class="t" style="left:892px;top:422px;font-size:12px;line-height:14px">锋矢</div><div class="a" style="left:923px;top:419px;width:33px;height:19px;background:#fff;border-top:1px solid #808080;border-left:1px solid #808080;border-right:1px solid #fff;border-bottom:1px solid #fff;box-shadow:inset 1px 1px 0 #404040, inset -1px -1px 0 #d4d0c8"></div><div class="t" style="left:926px;top:422px;font-size:12px;line-height:13px;letter-spacing:-0.8px">500</div><div class="t" style="left:814px;top:446px;font-size:12px;line-height:14px">雁行</div><div class="a" style="left:845px;top:443px;width:33px;height:19px;background:#fff;border-top:1px solid #808080;border-left:1px solid #808080;border-right:1px solid #fff;border-bottom:1px solid #fff;box-shadow:inset 1px 1px 0 #404040, inset -1px -1px 0 #d4d0c8"></div><div class="t" style="left:848px;top:446px;font-size:12px;line-height:13px;letter-spacing:-0.8px">0</div><div class="t" style="left:892px;top:446px;font-size:12px;line-height:14px">箕型</div><div class="a" style="left:923px;top:443px;width:33px;height:19px;background:#fff;border-top:1px solid #808080;border-left:1px solid #808080;border-right:1px solid #fff;border-bottom:1px solid #fff;box-shadow:inset 1px 1px 0 #404040, inset -1px -1px 0 #d4d0c8"></div><div class="t" style="left:926px;top:446px;font-size:12px;line-height:13px;letter-spacing:-0.8px">0</div><div class="t" style="left:814px;top:470px;font-size:12px;line-height:14px">长蛇</div><div class="a" style="left:845px;top:467px;width:33px;height:19px;background:#fff;border-top:1px solid #808080;border-left:1px solid #808080;border-right:1px solid #fff;border-bottom:1px solid #fff;box-shadow:inset 1px 1px 0 #404040, inset -1px -1px 0 #d4d0c8"></div><div class="t" style="left:848px;top:470px;font-size:12px;line-height:13px;letter-spacing:-0.8px">0</div><div class="t" style="left:892px;top:470px;font-size:12px;line-height:14px">方圆</div><div class="a" style="left:923px;top:467px;width:33px;height:19px;background:#fff;border-top:1px solid #808080;border-left:1px solid #808080;border-right:1px solid #fff;border-bottom:1px solid #fff;box-shadow:inset 1px 1px 0 #404040, inset -1px -1px 0 #d4d0c8"></div><div class="t" style="left:926px;top:470px;font-size:12px;line-height:13px;letter-spacing:-0.8px">0</div><div class="t" style="left:814px;top:496px;font-size:12px;line-height:14px">井栏</div><div class="a" style="left:845px;top:493px;width:33px;height:19px;background:#fff;border-top:1px solid #808080;border-left:1px solid #808080;border-right:1px solid #fff;border-bottom:1px solid #fff;box-shadow:inset 1px 1px 0 #404040, inset -1px -1px 0 #d4d0c8"></div><div class="t" style="left:848px;top:496px;font-size:12px;line-height:13px;letter-spacing:-0.8px">500</div><div class="t" style="left:892px;top:496px;font-size:12px;line-height:14px">冲车</div><div class="a" style="left:923px;top:493px;width:33px;height:19px;background:#fff;border-top:1px solid #808080;border-left:1px solid #808080;border-right:1px solid #fff;border-bottom:1px solid #fff;box-shadow:inset 1px 1px 0 #404040, inset -1px -1px 0 #d4d0c8"></div><div class="t" style="left:926px;top:496px;font-size:12px;line-height:13px;letter-spacing:-0.8px">500</div><div class="t" style="left:814px;top:520px;font-size:12px;line-height:14px">发石</div><div class="a" style="left:845px;top:517px;width:33px;height:19px;background:#fff;border-top:1px solid #808080;border-left:1px solid #808080;border-right:1px solid #fff;border-bottom:1px solid #fff;box-shadow:inset 1px 1px 0 #404040, inset -1px -1px 0 #d4d0c8"></div><div class="t" style="left:848px;top:520px;font-size:12px;line-height:13px;letter-spacing:-0.8px">1000</div><div class="t" style="left:892px;top:520px;font-size:12px;line-height:14px">象兵</div><div class="a" style="left:923px;top:517px;width:33px;height:19px;background:#fff;border-top:1px solid #808080;border-left:1px solid #808080;border-right:1px solid #fff;border-bottom:1px solid #fff;box-shadow:inset 1px 1px 0 #404040, inset -1px -1px 0 #d4d0c8"></div><div class="t" style="left:926px;top:520px;font-size:12px;line-height:13px;letter-spacing:-0.8px">1000</div><div class="t" style="left:826px;top:544px;font-size:12px;line-height:14px">倭</div><div class="a" style="left:845px;top:541px;width:33px;height:19px;background:#fff;border-top:1px solid #808080;border-left:1px solid #808080;border-right:1px solid #fff;border-bottom:1px solid #fff;box-shadow:inset 1px 1px 0 #404040, inset -1px -1px 0 #d4d0c8"></div><div class="t" style="left:848px;top:544px;font-size:12px;line-height:13px;letter-spacing:-0.8px">300</div><div class="t" style="left:892px;top:544px;font-size:12px;line-height:14px">乌丸</div><div class="a" style="left:923px;top:541px;width:33px;height:19px;background:#fff;border-top:1px solid #808080;border-left:1px solid #808080;border-right:1px solid #fff;border-bottom:1px solid #fff;box-shadow:inset 1px 1px 0 #404040, inset -1px -1px 0 #d4d0c8"></div><div class="t" style="left:926px;top:544px;font-size:12px;line-height:13px;letter-spacing:-0.8px">600</div><div class="t" style="left:826px;top:569px;font-size:12px;line-height:14px">羌</div><div class="a" style="left:845px;top:566px;width:33px;height:19px;background:#fff;border-top:1px solid #808080;border-left:1px solid #808080;border-right:1px solid #fff;border-bottom:1px solid #fff;box-shadow:inset 1px 1px 0 #404040, inset -1px -1px 0 #d4d0c8"></div><div class="t" style="left:848px;top:569px;font-size:12px;line-height:13px;letter-spacing:-0.8px">600</div><div class="t" style="left:892px;top:569px;font-size:12px;line-height:14px">山越</div><div class="a" style="left:923px;top:566px;width:33px;height:19px;background:#fff;border-top:1px solid #808080;border-left:1px solid #808080;border-right:1px solid #fff;border-bottom:1px solid #fff;box-shadow:inset 1px 1px 0 #404040, inset -1px -1px 0 #d4d0c8"></div><div class="t" style="left:926px;top:569px;font-size:12px;line-height:13px;letter-spacing:-0.8px">300</div><div class="t" style="left:814px;top:593px;font-size:12px;line-height:14px">南蛮</div><div class="a" style="left:845px;top:590px;width:33px;height:19px;background:#fff;border-top:1px solid #808080;border-left:1px solid #808080;border-right:1px solid #fff;border-bottom:1px solid #fff;box-shadow:inset 1px 1px 0 #404040, inset -1px -1px 0 #d4d0c8"></div><div class="t" style="left:848px;top:593px;font-size:12px;line-height:13px;letter-spacing:-0.8px">300</div><div class="t" style="left:892px;top:593px;font-size:12px;line-height:14px">走舸</div><div class="a" style="left:923px;top:590px;width:33px;height:19px;background:#fff;border-top:1px solid #808080;border-left:1px solid #808080;border-right:1px solid #fff;border-bottom:1px solid #fff;box-shadow:inset 1px 1px 0 #404040, inset -1px -1px 0 #d4d0c8"></div><div class="t" style="left:926px;top:593px;font-size:12px;line-height:13px;letter-spacing:-0.8px">0</div><div class="t" style="left:814px;top:617px;font-size:12px;line-height:14px">艨艟</div><div class="a" style="left:845px;top:614px;width:33px;height:19px;background:#fff;border-top:1px solid #808080;border-left:1px solid #808080;border-right:1px solid #fff;border-bottom:1px solid #fff;box-shadow:inset 1px 1px 0 #404040, inset -1px -1px 0 #d4d0c8"></div><div class="t" style="left:848px;top:617px;font-size:12px;line-height:13px;letter-spacing:-0.8px">0</div><div class="t" style="left:890px;top:617px;font-size:12px;line-height:14px">楼船</div><div class="a" style="left:921px;top:614px;width:33px;height:19px;background:#fff;border-top:1px solid #808080;border-left:1px solid #808080;border-right:1px solid #fff;border-bottom:1px solid #fff;box-shadow:inset 1px 1px 0 #404040, inset -1px -1px 0 #d4d0c8"></div><div class="t" style="left:924px;top:617px;font-size:12px;line-height:13px;letter-spacing:-0.8px">500</div><div class="t" style="left:814px;top:641px;font-size:12px;line-height:14px">斗舰</div><div class="a" style="left:845px;top:638px;width:33px;height:19px;background:#fff;border-top:1px solid #808080;border-left:1px solid #808080;border-right:1px solid #fff;border-bottom:1px solid #fff;box-shadow:inset 1px 1px 0 #404040, inset -1px -1px 0 #d4d0c8"></div><div class="t" style="left:848px;top:641px;font-size:12px;line-height:13px;letter-spacing:-0.8px">800</div><div class="t" style="left:890px;top:641px;font-size:12px;line-height:14px">异船</div><div class="a" style="left:921px;top:638px;width:33px;height:19px;background:#fff;border-top:1px solid #808080;border-left:1px solid #808080;border-right:1px solid #fff;border-bottom:1px solid #fff;box-shadow:inset 1px 1px 0 #404040, inset -1px -1px 0 #d4d0c8"></div><div class="t" style="left:924px;top:641px;font-size:12px;line-height:13px;letter-spacing:-0.8px">0</div><div class="t" style="left:985px;top:381px;font-size:12px;line-height:14px">资金增长分隔点（<span style="font-size:15px">×</span>4096）</div><div class="a" style="left:987px;top:400px;width:32px;height:19px;background:#fff;border-top:1px solid #808080;border-left:1px solid #808080;border-right:1px solid #fff;border-bottom:1px solid #fff;box-shadow:inset 1px 1px 0 #404040, inset -1px -1px 0 #d4d0c8"></div><div class="t" style="left:990px;top:403px;font-size:12px;line-height:13px;letter-spacing:-0.8px">25</div><div class="a" style="left:1020px;top:400px;width:32px;height:19px;background:#fff;border-top:1px solid #808080;border-left:1px solid #808080;border-right:1px solid #fff;border-bottom:1px solid #fff;box-shadow:inset 1px 1px 0 #404040, inset -1px -1px 0 #d4d0c8"></div><div class="t" style="left:1023px;top:403px;font-size:12px;line-height:13px;letter-spacing:-0.8px">50</div><div class="a" style="left:1053px;top:400px;width:32px;height:19px;background:#fff;border-top:1px solid #808080;border-left:1px solid #808080;border-right:1px solid #fff;border-bottom:1px solid #fff;box-shadow:inset 1px 1px 0 #404040, inset -1px -1px 0 #d4d0c8"></div><div class="t" style="left:1056px;top:403px;font-size:12px;line-height:13px;letter-spacing:-0.8px">75</div><div class="t" style="left:985px;top:426px;font-size:12px;line-height:14px">兵粮增长分隔点（<span style="font-size:15px">×</span>8192）</div><div class="a" style="left:987px;top:445px;width:32px;height:19px;background:#fff;border-top:1px solid #808080;border-left:1px solid #808080;border-right:1px solid #fff;border-bottom:1px solid #fff;box-shadow:inset 1px 1px 0 #404040, inset -1px -1px 0 #d4d0c8"></div><div class="t" style="left:990px;top:448px;font-size:12px;line-height:13px;letter-spacing:-0.8px">37</div><div class="a" style="left:1020px;top:445px;width:32px;height:19px;background:#fff;border-top:1px solid #808080;border-left:1px solid #808080;border-right:1px solid #fff;border-bottom:1px solid #fff;box-shadow:inset 1px 1px 0 #404040, inset -1px -1px 0 #d4d0c8"></div><div class="t" style="left:1023px;top:448px;font-size:12px;line-height:13px;letter-spacing:-0.8px">75</div><div class="a" style="left:1053px;top:445px;width:32px;height:19px;background:#fff;border-top:1px solid #808080;border-left:1px solid #808080;border-right:1px solid #fff;border-bottom:1px solid #fff;box-shadow:inset 1px 1px 0 #404040, inset -1px -1px 0 #d4d0c8"></div><div class="t" style="left:1056px;top:448px;font-size:12px;line-height:13px;letter-spacing:-0.8px">110</div><div class="t" style="left:985px;top:471px;font-size:12px;line-height:14px">兵役增长分隔点（<span style="font-size:15px">×</span>16384）</div><div class="a" style="left:987px;top:490px;width:32px;height:19px;background:#fff;border-top:1px solid #808080;border-left:1px solid #808080;border-right:1px solid #fff;border-bottom:1px solid #fff;box-shadow:inset 1px 1px 0 #404040, inset -1px -1px 0 #d4d0c8"></div><div class="t" style="left:990px;top:493px;font-size:12px;line-height:13px;letter-spacing:-0.8px">37</div><div class="a" style="left:1020px;top:490px;width:32px;height:19px;background:#fff;border-top:1px solid #808080;border-left:1px solid #808080;border-right:1px solid #fff;border-bottom:1px solid #fff;box-shadow:inset 1px 1px 0 #404040, inset -1px -1px 0 #d4d0c8"></div><div class="t" style="left:1023px;top:493px;font-size:12px;line-height:13px;letter-spacing:-0.8px">49</div><div class="a" style="left:1053px;top:490px;width:32px;height:19px;background:#fff;border-top:1px solid #808080;border-left:1px solid #808080;border-right:1px solid #fff;border-bottom:1px solid #fff;box-shadow:inset 1px 1px 0 #404040, inset -1px -1px 0 #d4d0c8"></div><div class="t" style="left:1056px;top:493px;font-size:12px;line-height:13px;letter-spacing:-0.8px">62</div><div class="t" style="left:984px;top:521px;font-size:12px;line-height:14px">俸禄倍数</div><div class="a" style="left:1037px;top:519px;width:33px;height:19px;background:#fff;border-top:1px solid #808080;border-left:1px solid #808080;border-right:1px solid #fff;border-bottom:1px solid #fff;box-shadow:inset 1px 1px 0 #404040, inset -1px -1px 0 #d4d0c8"></div><div class="t" style="left:1040px;top:522px;font-size:12px;line-height:13px;letter-spacing:-0.8px">2</div><div class="t" style="left:984px;top:548px;font-size:12px;line-height:14px">剧本年差</div><div class="a" style="left:1037px;top:546px;width:36px;height:19px;background:#fff;border-top:1px solid #808080;border-left:1px solid #808080;border-right:1px solid #fff;border-bottom:1px solid #fff;box-shadow:inset 1px 1px 0 #404040, inset -1px -1px 0 #d4d0c8"></div><div class="t" style="left:1040px;top:549px;font-size:12px;line-height:13px;letter-spacing:-0.8px">400</div><div class="a" style="left:984px;top:580px;width:83px;height:21px;background:#ece9d8;border:none;box-shadow:inset -1px -1px 0 #404040, inset 1px 1px 0 #fff, inset -2px -2px 0 #808080"></div><div class="t" style="left:984px;top:583px;width:83px;text-align:center;font-size:12px;line-height:14px">保存设置</div><div class="a" style="left:984px;top:613px;width:83px;height:21px;background:#ece9d8;border:none;box-shadow:inset -1px -1px 0 #404040, inset 1px 1px 0 #fff, inset -2px -2px 0 #808080"></div><div class="t" style="left:984px;top:616px;width:83px;text-align:center;font-size:12px;line-height:14px">读取设置</div><div class="a" style="left:984px;top:649px;width:60px;height:21px;background:#ece9d8;border:1px solid #000;box-shadow:inset -1px -1px 0 #404040, inset 1px 1px 0 #fff, inset -2px -2px 0 #808080"></div><div class="t" style="left:984px;top:652px;width:60px;text-align:center;font-size:12px;line-height:14px">确认</div><div class="a" style="left:1057px;top:649px;width:61px;height:21px;background:#ece9d8;border:none;box-shadow:inset -1px -1px 0 #404040, inset 1px 1px 0 #fff, inset -2px -2px 0 #808080"></div><div class="t" style="left:1057px;top:652px;width:61px;text-align:center;font-size:12px;line-height:14px">取消</div><svg style="left:1002px;top:654px" width="14" height="22"><path d="M0.5,0.5 V17 L4.5,13 L7.5,20 L10,19 L7,12 L12.5,12 Z" fill="#fff" stroke="#000" stroke-width="1"/></svg><div class="a" style="left:0;top:843px;width:158px;height:26px;background:#ece9d8;box-shadow:inset 1px 1px 0 #fff, inset -1px -1px 0 #a0a0a0"></div><div class="a" style="left:3px;top:846px;width:20px;height:21px;background:#c0c0c0;border-left:1px solid #fff;border-top:1px solid #fff;border-right:1px solid #000;border-bottom:1px solid #000"></div><div class="a" style="left:23px;top:846px;width:72px;height:21px;background:#c0c0c0;border-left:1px solid #fff;border-top:1px solid #fff;border-right:1px solid #000;border-bottom:1px solid #000"></div><div class="a" style="left:95px;top:846px;width:20px;height:21px;background:#c0c0c0;border-left:1px solid #fff;border-top:1px solid #fff;border-right:1px solid #000;border-bottom:1px solid #000"></div><div class="a" style="left:115px;top:846px;width:20px;height:21px;background:#c0c0c0;border-left:1px solid #fff;border-top:1px solid #fff;border-right:1px solid #000;border-bottom:1px solid #000"></div><div class="a" style="left:135px;top:846px;width:20px;height:21px;background:#c0c0c0;border-left:1px solid #fff;border-top:1px solid #fff;border-right:1px solid #000;border-bottom:1px solid #000"></div><div class="t" style="left:5px;top:848px;color:#e01010;font-weight:bold;font-size:15px;line-height:16px">中</div>
<div class="t" style="left:26px;top:848px;font-size:16px;line-height:17px">极品五笔</div>
<svg style="left:96px;top:848px" width="18" height="18"><path d="M10,2.5 Q17,9 12,15 Q7,18 2.5,12.5 Q8,13.5 9.8,9 Q10.8,6 10,2.5 Z" fill="#000"/></svg>
<div class="a" style="left:120px;top:855px;width:4px;height:4px;border:1px solid #000"></div>
<div class="a" style="left:126px;top:855px;width:3px;height:3px;background:#000"></div><div class="a" style="left:128px;top:857px;width:1px;height:3px;background:#000"></div><div class="a" style="left:127px;top:860px;width:1px;height:1px;background:#000"></div>
<div class="a" style="left:136px;top:848px;width:18px;height:18px;background:#8c8c8c"></div>
<div class="a" style="left:136px;top:850px;width:18px;height:1px;background:#d8d8d8"></div>
<div class="a" style="left:137px;top:852px;width:3px;height:2px;background:#f0f0f0"></div><div class="a" style="left:141px;top:852px;width:3px;height:2px;background:#f0f0f0"></div><div class="a" style="left:145px;top:852px;width:3px;height:2px;background:#f0f0f0"></div><div class="a" style="left:149px;top:852px;width:3px;height:2px;background:#f0f0f0"></div><div class="a" style="left:137px;top:856px;width:3px;height:2px;background:#f0f0f0"></div><div class="a" style="left:140px;top:856px;width:3px;height:2px;background:#f0f0f0"></div><div class="a" style="left:143px;top:856px;width:3px;height:2px;background:#f0f0f0"></div><div class="a" style="left:146px;top:856px;width:3px;height:2px;background:#f0f0f0"></div><div class="a" style="left:149px;top:856px;width:3px;height:2px;background:#f0f0f0"></div><div class="a" style="left:137px;top:860px;width:4px;height:2px;background:#f0f0f0"></div><div class="a" style="left:141px;top:860px;width:4px;height:2px;background:#f0f0f0"></div><div class="a" style="left:146px;top:860px;width:4px;height:2px;background:#f0f0f0"></div><div class="a" style="left:0;top:869px;width:1600px;height:31px;background:linear-gradient(#3168d5 0,#4993e6 2px,#2157d7 5px,#245edc 10px,#2257d5 27px,#1941a5 31px)"></div>
<div class="a" style="left:0;top:869px;width:97px;height:31px;border-radius:0 12px 12px 0;background:linear-gradient(#3c8e3c 0,#52b452 3px,#3c9c3c 8px,#37963a 24px,#2e7a2e 31px);box-shadow:inset -2px 0 3px #225e22"></div>
<svg style="left:10px;top:874px" width="21" height="20" viewBox="0 0 20 18">
<path d="M3,2 Q6,0 9,2 L8,8 Q5,6 2,8 Z" fill="#f05a28"/><path d="M10,2.5 Q13,4 17,2 L16,8 Q13,10 9,8.5 Z" fill="#7cbb42"/>
<path d="M2,9 Q5,7 8,9 L7,15 Q4,13 1,15 Z" fill="#3a8ee8"/><path d="M9,9.5 Q12,11 16,9 L15,15 Q12,17 8,15.5 Z" fill="#f8c300"/></svg>
<div class="t" style="left:37px;top:875px;color:#fff;font-style:italic;font-size:17px;line-height:20px;font-weight:normal;text-shadow:1px 1px 1px #2a5a2a">开始</div>
<div class="a" style="left:107px;top:874px;width:138px;height:22px;border-radius:3px;background:linear-gradient(#5a9cf8,#3c81f3 3px,#3b80f2 18px,#2e6ee6);box-shadow:inset -1px -1px 0 #1c50c0, inset 1px 1px 0 #7ab4ff"></div><div class="a" style="left:118px;top:878px;width:14px;height:15px;background:#f8c840;transform:skewX(-6deg)"></div><div class="a" style="left:117px;top:876px;width:5px;height:5px;background:#e04a2a;border-radius:50%"></div><div class="t" style="left:137px;top:877px;color:#fff;font-family:Liberation Mono,monospace;font-size:10px;line-height:14px"><span style="font-family:Liberation Sans,sans-serif;font-size:12px">夏日回忆</span></div><div class="a" style="left:247px;top:874px;width:138px;height:22px;border-radius:3px;background:linear-gradient(#5a9cf8,#3c81f3 3px,#3b80f2 18px,#2e6ee6);box-shadow:inset -1px -1px 0 #1c50c0, inset 1px 1px 0 #7ab4ff"></div><svg style="left:255px;top:877px" width="18" height="17"><path d="M4.5,1.5 H13 L16.5,5 V15.5 H4.5 Z" fill="#f4f0e8" stroke="#a8a090"/><path d="M13,1.5 V5 H16.5" fill="#fff" stroke="#a8a090"/><ellipse cx="7" cy="9" rx="5" ry="4.5" fill="none" stroke="#2050b8" stroke-width="2.2"/><path d="M2.5,9 H11" stroke="#2050b8" stroke-width="1.6"/><path d="M1,12 Q6,4 13,5" fill="none" stroke="#1838a0" stroke-width="1.2"/></svg><div class="t" style="left:277px;top:877px;color:#fff;font-family:Liberation Mono,monospace;font-size:10px;line-height:14px"><span style="font-family:Liberation Sans,sans-serif;font-size:12px">“高难度优化</span>...</div><div class="a" style="left:387px;top:874px;width:138px;height:22px;border-radius:3px;background:linear-gradient(#5a9cf8,#3c81f3 3px,#3b80f2 18px,#2e6ee6);box-shadow:inset -1px -1px 0 #1c50c0, inset 1px 1px 0 #7ab4ff"></div><svg style="left:395px;top:877px" width="18" height="17"><path d="M4.5,1.5 H13 L16.5,5 V15.5 H4.5 Z" fill="#f4f0e8" stroke="#a8a090"/><path d="M13,1.5 V5 H16.5" fill="#fff" stroke="#a8a090"/><ellipse cx="7" cy="9" rx="5" ry="4.5" fill="none" stroke="#2050b8" stroke-width="2.2"/><path d="M2.5,9 H11" stroke="#2050b8" stroke-width="1.6"/><path d="M1,12 Q6,4 13,5" fill="none" stroke="#1838a0" stroke-width="1.2"/></svg><div class="t" style="left:417px;top:877px;color:#fff;font-family:Liberation Mono,monospace;font-size:10px;line-height:14px">hao123<span style="font-family:Liberation Sans,sans-serif;font-size:12px">－－我</span>...</div><div class="a" style="left:527px;top:874px;width:138px;height:22px;border-radius:3px;background:linear-gradient(#5a9cf8,#3c81f3 3px,#3b80f2 18px,#2e6ee6);box-shadow:inset -1px -1px 0 #1c50c0, inset 1px 1px 0 #7ab4ff"></div><svg style="left:537px;top:878px" width="16" height="14" viewBox="0 0 16 14"><use href="#sfolder"/></svg><div class="t" style="left:557px;top:877px;color:#fff;font-family:Liberation Mono,monospace;font-size:10px;line-height:14px">E:\<span style="font-family:Liberation Sans,sans-serif;font-size:12px">文本与游戏</span>...</div><div class="a" style="left:667px;top:874px;width:138px;height:22px;border-radius:3px;background:#1e4cb4;box-shadow:inset 1px 1px 2px #0e2c80"></div><div class="a" style="left:677px;top:878px;width:16px;height:16px;background:#fff"></div><div class="t" style="left:679px;top:877px;color:#1010c0;font-weight:bold;font-size:17px;line-height:18px;font-family:Liberation Serif,serif">9</div><div class="t" style="left:697px;top:877px;color:#fff;font-family:Liberation Mono,monospace;font-size:10px;line-height:14px"><span style="font-family:Liberation Sans,sans-serif;font-size:12px">高难度优化伴</span>...</div><div class="a" style="left:807px;top:874px;width:138px;height:22px;border-radius:3px;background:linear-gradient(#5a9cf8,#3c81f3 3px,#3b80f2 18px,#2e6ee6);box-shadow:inset -1px -1px 0 #1c50c0, inset 1px 1px 0 #7ab4ff"></div><svg style="left:817px;top:878px" width="16" height="14" viewBox="0 0 16 14"><use href="#sfolder"/></svg><div class="t" style="left:837px;top:877px;color:#fff;font-family:Liberation Mono,monospace;font-size:10px;line-height:14px">D:\<span style="font-family:Liberation Sans,sans-serif;font-size:12px">三国志</span>9</div><div class="a" style="left:947px;top:874px;width:138px;height:22px;border-radius:3px;background:linear-gradient(#5a9cf8,#3c81f3 3px,#3b80f2 18px,#2e6ee6);box-shadow:inset -1px -1px 0 #1c50c0, inset 1px 1px 0 #7ab4ff"></div><svg style="left:957px;top:878px" width="16" height="14" viewBox="0 0 16 14"><use href="#sfolder"/></svg><div class="t" style="left:977px;top:877px;color:#fff;font-family:Liberation Mono,monospace;font-size:10px;line-height:14px">D:\pic out</div><div class="a" style="left:1087px;top:874px;width:138px;height:22px;border-radius:3px;background:linear-gradient(#5a9cf8,#3c81f3 3px,#3b80f2 18px,#2e6ee6);box-shadow:inset -1px -1px 0 #1c50c0, inset 1px 1px 0 #7ab4ff"></div><svg style="left:1097px;top:878px" width="16" height="14" viewBox="0 0 16 14"><use href="#sfolder"/></svg><div class="t" style="left:1117px;top:877px;color:#fff;font-family:Liberation Mono,monospace;font-size:10px;line-height:14px">E:\<span style="font-family:Liberation Sans,sans-serif;font-size:12px">三国志</span>9<span style="font-family:Liberation Sans,sans-serif;font-size:12px">剧</span>...</div><div class="a" style="left:1227px;top:874px;width:138px;height:22px;border-radius:3px;background:linear-gradient(#5a9cf8,#3c81f3 3px,#3b80f2 18px,#2e6ee6);box-shadow:inset -1px -1px 0 #1c50c0, inset 1px 1px 0 #7ab4ff"></div><div class="a" style="left:1240px;top:878px;width:16px;height:15px;background:#000;overflow:hidden"><div class="a" style="left:9px;top:0;width:7px;height:6px;background:#b01818"></div><div class="t" style="left:0;top:-1px;color:#f0e070;font-weight:bold;font-size:14px;line-height:14px;font-family:Liberation Serif,serif">L</div><div class="t" style="left:7px;top:-1px;color:#fff;font-size:9px;line-height:9px;font-weight:bold">x</div><div class="t" style="left:8px;top:7px;color:#40e040;font-size:7px;line-height:8px;font-weight:bold">PK</div></div><div class="t" style="left:1272px;top:877px;color:#fff;font-family:Liberation Mono,monospace;font-size:10px;line-height:14px"><span style="font-family:Liberation Sans,sans-serif;font-size:12px">辦</span> в 17.PK</div><svg style="left:1380px;top:879px" width="17" height="13"><rect x="0.5" y="3.5" width="16" height="9" rx="1" fill="#f4f4f4" stroke="#101010"/><path d="M2.5,6 H14.5 M2.5,8 H14.5 M4.5,10 H12.5" stroke="#303030" stroke-dasharray="1 1"/><path d="M8.5,0 V3.5 M5,1.5 H12" stroke="#101010"/></svg>
<div class="a" style="left:1415px;top:869px;width:185px;height:31px;background:linear-gradient(#0c70dc 0,#3aa4f4 1px,#1ba2f0 3px,#12a0ec 8px,#0f98e4 26px,#0b80d0 31px);border-left:1px solid #0c5ec0;box-shadow:inset 1px 0 1px #6cc0f8"></div>
<div class="a" style="left:1406px;top:876px;width:19px;height:19px;border-radius:50%;background:radial-gradient(circle at 45% 30%,#c8e8ff,#3d92f0 70%,#2a70d8);box-shadow:0 0 0 1px #8cc8ff"></div>
<svg style="left:1410px;top:880px" width="11" height="11"><path d="M7,1.5 L3,5.5 L7,9.5" fill="none" stroke="#fff" stroke-width="2.4"/></svg>
<svg style="left:1427px;top:876px" width="16" height="18" viewBox="0 0 16 18"><ellipse cx="7.5" cy="10" rx="6" ry="7.5" fill="#111"/><ellipse cx="7.5" cy="12" rx="4.3" ry="5" fill="#fafafa"/><path d="M2,8.5 Q7.5,11 13,8.5 L13,10.5 Q7.5,13 2,10.5 Z" fill="#e8406a"/><path d="M5,6.5 L10,6.5 L7.5,8.5 Z" fill="#f8c010"/><ellipse cx="4" cy="17" rx="3" ry="1.2" fill="#f8b010"/><ellipse cx="11" cy="17" rx="3" ry="1.2" fill="#f8b010"/><circle cx="12" cy="13" r="4" fill="#f8a020" stroke="#c06010" stroke-width=".5"/><path d="M9.5,12 H14.5 M9.5,14 H14.5" stroke="#fff" stroke-width="1"/></svg><svg style="left:1443px;top:876px" width="16" height="18" viewBox="0 0 16 18"><ellipse cx="7.5" cy="10" rx="6" ry="7.5" fill="#111"/><ellipse cx="7.5" cy="12" rx="4.3" ry="5" fill="#fafafa"/><path d="M2,8.5 Q7.5,11 13,8.5 L13,10.5 Q7.5,13 2,10.5 Z" fill="#e8406a"/><path d="M5,6.5 L10,6.5 L7.5,8.5 Z" fill="#f8c010"/><ellipse cx="4" cy="17" rx="3" ry="1.2" fill="#f8b010"/><ellipse cx="11" cy="17" rx="3" ry="1.2" fill="#f8b010"/></svg><div class="a" style="left:1462px;top:877px;width:16px;height:16px;background:#0a0a0a"></div>
<svg style="left:1462px;top:877px" width="16" height="16"><path d="M2,3 Q4,1 7,3 L7,15 L5,15 L4,10 L2,10 Z M14,3 Q12,1 9,3 L9,15 L11,15 L12,10 L14,10 Z" fill="#f4f4f4"/><circle cx="8" cy="10" r="1.2" fill="#e04080"/></svg>
<svg style="left:1480px;top:876px" width="16" height="18"><path d="M2.5,12 V8 Q2.5,2 8,2 Q13.5,2 13.5,8 V12" fill="none" stroke="#62b830" stroke-width="2.2"/><ellipse cx="4" cy="13" rx="2.6" ry="3.4" fill="#8cd050" stroke="#3a8a20" stroke-width=".6"/><ellipse cx="12" cy="13" rx="2.6" ry="3.4" fill="#8cd050" stroke="#3a8a20" stroke-width=".6"/></svg>
<svg style="left:1497px;top:876px" width="16" height="18"><rect x="5.5" y="1.5" width="9" height="7" fill="#bcdcf8" stroke="#5a7898"/><rect x="1.5" y="6.5" width="9" height="7" fill="#bcdcf8" stroke="#5a7898"/><path d="M3,15.5 H9 M10,10.5 H14" stroke="#d0d8e0" stroke-width="2"/></svg>
<svg style="left:1517px;top:877px" width="15" height="15"><circle cx="7.5" cy="7.5" r="6.8" fill="#e02828" stroke="#f8a0a0" stroke-width=".8"/><path d="M5,4.5 A4,4 0 1 0 10,4.5" fill="none" stroke="#fff" stroke-width="1.6"/><path d="M7.5,2.5 V7.5" stroke="#fff" stroke-width="1.6"/></svg>
<svg style="left:1533px;top:876px" width="17" height="18"><path d="M1,8 Q8.5,-2 16,8 Q12,6 8.5,8 Q5,6 1,8 Z" fill="#30b840" stroke="#1a7a20" stroke-width=".6"/><path d="M8.5,7 V15 Q8.5,17 6.5,16" stroke="#1a7a20" fill="none" stroke-width="1.4"/></svg>
<div class="t" style="left:1556px;top:877px;color:#fff;font-family:Liberation Mono,monospace;font-size:11px;line-height:14px;letter-spacing:-0.3px">12:40</div></body></html>
